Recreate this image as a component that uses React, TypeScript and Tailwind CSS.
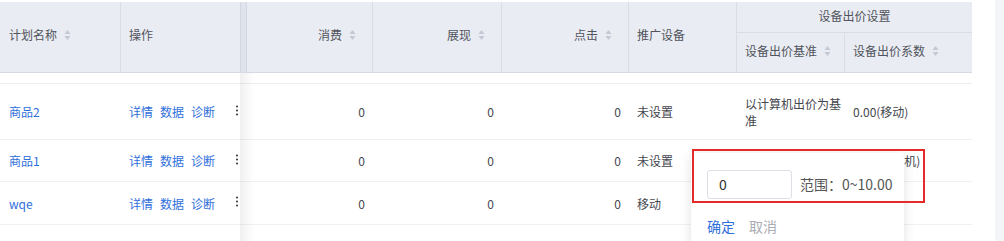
import React from "react";

const FONT = "font-['Noto_Sans_CJK_SC',sans-serif]";

function SortIcon() {
  return (
    <svg width="7" height="12" viewBox="0 0 7 12" className="ml-[7px] shrink-0 block">
      <path d="M3.5 1 L6.5 5 L0.5 5 Z" fill="#c3c8d2" />
      <path d="M3.5 11 L6.5 7 L0.5 7 Z" fill="#c3c8d2" />
    </svg>
  );
}

function Kebab() {
  return (
    <svg width="4" height="11" viewBox="0 0 4 11" className="ml-[13px] -mt-[3px] shrink-0">
      <circle cx="2" cy="1.5" r="1.05" fill="#3a3d44" />
      <circle cx="2" cy="5.5" r="1.05" fill="#3a3d44" />
      <circle cx="2" cy="9.5" r="1.05" fill="#3a3d44" />
    </svg>
  );
}

type Row = {
  name: string;
  h: string;
  device: string;
  base: string;
  coef: string;
};

const rows: Row[] = [
  { name: "商品2", h: "h-[56px]", device: "未设置", base: "以计算机出价为基准", coef: "0.00(移动)" },
  { name: "商品1", h: "h-[42px]", device: "未设置", base: "", coef: "0.00(计算机)" },
  { name: "wqe", h: "h-[43px]", device: "移动", base: "", coef: "" },
];

export default function App() {
  return (
    <div className={`relative w-[1004px] h-[241px] overflow-hidden bg-white text-[12px] ${FONT}`}>
      <div className="flex h-full">
        <div className="w-[995px] pt-[2px]">
          {/* header */}
          <div className="flex w-[972px] h-[71px] bg-[#e9ecf3] border-b border-[#d6dae4] text-[#51545c] whitespace-nowrap">
            <div className="w-[121px] shrink-0 border-r border-[#d9dde6] flex items-center pl-[9px] pb-[4px]">
              <span>计划名称</span>
              <SortIcon />
            </div>
            <div className="w-[119px] shrink-0 flex items-center pl-[8px] pb-[4px]">操作</div>
            <div className="w-[7px] shrink-0 bg-[#dfe3eb] border-x border-[#d3d7e1]" />
            <div className="w-[126px] shrink-0 border-r border-[#d9dde6] flex items-center justify-end pr-[16px] pb-[4px]">
              <span>消费</span>
              <SortIcon />
            </div>
            <div className="w-[129px] shrink-0 border-r border-[#d9dde6] flex items-center justify-end pr-[16px] pb-[4px]">
              <span>展现</span>
              <SortIcon />
            </div>
            <div className="w-[127px] shrink-0 border-r border-[#d9dde6] flex items-center justify-end pr-[16px] pb-[4px]">
              <span>点击</span>
              <SortIcon />
            </div>
            <div className="w-[108px] shrink-0 border-r border-[#d9dde6] flex items-center pl-[8px] pb-[4px]">推广设备</div>
            <div className="w-[235px] shrink-0 flex flex-col">
              <div className="h-[31px] border-b border-[#d9dde6] flex items-center justify-center pb-[3px]">
                设备出价设置
              </div>
              <div className="flex flex-1">
                <div className="w-[108px] shrink-0 border-r border-[#d9dde6] flex items-center pl-[8px] pb-[3px]">
                  <span>设备出价基准</span>
                  <SortIcon />
                </div>
                <div className="w-[127px] shrink-0 flex items-center pl-[8px] pb-[3px]">
                  <span>设备出价系数</span>
                  <SortIcon />
                </div>
              </div>
            </div>
          </div>

          {/* spacer row */}
          <div className="w-[972px] h-[11px] border-b border-[#eceef3]" />

          {/* body */}
          {rows.map((r) => (
            <div
              key={r.name}
              className={`flex w-[972px] ${r.h} border-b border-[#eef0f4] text-[#43464d] leading-[17px]`}
            >
              <div className="w-[121px] shrink-0 flex items-center pl-[9px] text-[#2f6fdb]">{r.name}</div>
              <div className="w-[119px] shrink-0 flex items-center pl-[8px] text-[#2f6fdb] gap-[7px]">
                <span>详情</span>
                <span>数据</span>
                <span>诊断</span>
                <Kebab />
              </div>
              <div className="w-[7px] shrink-0" />
              <div className="w-[126px] shrink-0 flex items-center justify-end pr-[8px]">0</div>
              <div className="w-[129px] shrink-0 flex items-center justify-end pr-[8px]">0</div>
              <div className="w-[127px] shrink-0 flex items-center justify-end pr-[8px]">0</div>
              <div className="w-[108px] shrink-0 flex items-center pl-[8px]">{r.device}</div>
              <div className="w-[108px] shrink-0 flex items-center pl-[8px] pr-[2px]">{r.base}</div>
              <div className="w-[127px] shrink-0 flex items-center pl-[8px] whitespace-nowrap">{r.coef}</div>
            </div>
          ))}
        </div>
        <div className="w-[9px] bg-[#f4f5f8]" />
      </div>

      {/* fixed column shadow */}
      <div className="absolute left-[240px] top-[73px] bottom-0 w-[14px] bg-gradient-to-r from-[rgba(0,0,0,0.06)] to-transparent" />

      {/* popover */}
      <div className="absolute left-[691px] top-[153px] w-[213px] h-[100px] bg-white rounded-[4px] shadow-[0_2px_12px_rgba(0,0,0,0.12)] px-[16px] pt-[17px] text-[14px] whitespace-nowrap">
        <div className="flex items-center">
          <div className="w-[85px] h-[29px] shrink-0 border border-[#dcdfe6] rounded-[3px] flex items-center pl-[11px] text-[#333]">
            0
          </div>
          <span className="ml-[8px] text-[#555]">范围：0~10.00</span>
        </div>
        <div className="flex mt-[19px] leading-[16px] gap-[14px]">
          <span className="text-[#2f6fdb]">确定</span>
          <span className="text-[#a9acb3]">取消</span>
        </div>
      </div>

      {/* annotation */}
      <div className="absolute left-[692px] top-[149px] w-[233px] h-[54px] border-2 border-[#e32b2b]" />
    </div>
  );
}
